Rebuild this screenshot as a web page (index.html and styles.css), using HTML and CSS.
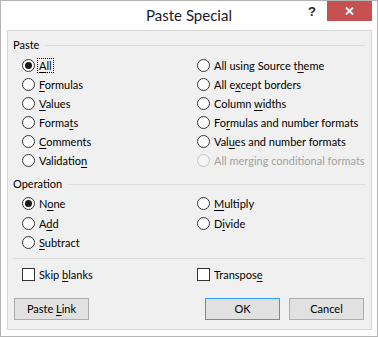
FILE: index.html
```html
<!DOCTYPE html>
<html>
<head>
<meta charset="utf-8">
<link rel="stylesheet" href="styles.css">
</head>
<body>
<div class="window">
  <div class="titlebar">
    <div></div>
    <div class="title">Paste Special</div>
    <div class="controls">
      <span class="help">?</span>
      <span class="close"><svg width="9" height="8" viewBox="0 0 9 8"><path d="M1 0.5 L8 7.5 M8 0.5 L1 7.5" stroke="#fff" stroke-width="1.8"/></svg></span>
    </div>
  </div>
  <div class="panel">
    <div class="legend"><span>Paste</span><i></i></div>
    <div class="grid paste">
      <label class="opt"><span class="radio on"></span><span class="focus"><u>A</u>ll</span></label>
      <label class="opt"><span class="radio"></span><span>All using Source t<u>h</u>eme</span></label>
      <label class="opt"><span class="radio"></span><span><u>F</u>ormulas</span></label>
      <label class="opt"><span class="radio"></span><span>All e<u>x</u>cept borders</span></label>
      <label class="opt"><span class="radio"></span><span><u>V</u>alues</span></label>
      <label class="opt"><span class="radio"></span><span>Column <u>w</u>idths</span></label>
      <label class="opt"><span class="radio"></span><span>Forma<u>t</u>s</span></label>
      <label class="opt"><span class="radio"></span><span>Fo<u>r</u>mulas and number formats</span></label>
      <label class="opt"><span class="radio"></span><span><u>C</u>omments</span></label>
      <label class="opt"><span class="radio"></span><span>Val<u>u</u>es and number formats</span></label>
      <label class="opt"><span class="radio"></span><span>Validatio<u>n</u></span></label>
      <label class="opt disabled"><span class="radio"></span><span>All merging conditional formats</span></label>
    </div>
    <div class="legend op"><span>Operation</span><i></i></div>
    <div class="grid operation">
      <label class="opt"><span class="radio on"></span><span>N<u>o</u>ne</span></label>
      <label class="opt"><span class="radio"></span><span><u>M</u>ultiply</span></label>
      <label class="opt"><span class="radio"></span><span>A<u>d</u>d</span></label>
      <label class="opt"><span class="radio"></span><span>D<u>i</u>vide</span></label>
      <label class="opt"><span class="radio"></span><span><u>S</u>ubtract</span></label>
    </div>
    <div class="sep"></div>
    <div class="grid checks">
      <label class="opt"><span class="check"></span><span>Skip <u>b</u>lanks</span></label>
      <label class="opt"><span class="check"></span><span>Transpos<u>e</u></span></label>
    </div>
    <div class="buttons">
      <button class="btn">Paste <u>L</u>ink</button>
      <span class="spacer"></span>
      <button class="btn default">OK</button>
      <button class="btn">Cancel</button>
    </div>
  </div>
</div>
</body>
</html>
```

FILE: styles.css
```css
* { box-sizing: border-box; }
html, body { margin: 0; padding: 0; background: #fff; }
body {
  font-family: Lato, "Noto Sans", sans-serif;
  font-size: 11px;
  color: #000;
}
.window {
  width: 378px;
  height: 337px;
  border: 1px solid #b4b4b4;
  background: #fff;
  display: flex;
  flex-direction: column;
}
.titlebar {
  height: 29px;
  display: grid;
  grid-template-columns: 1fr auto 1fr;
  align-items: start;
}
.title {
  font-size: 15px;
  color: #1a1a2a;
  line-height: 18px;
  margin-top: 5px;
}
.controls {
  display: flex;
  justify-content: flex-end;
  align-items: flex-start;
  padding-right: 5px;
}
.help {
  font-weight: bold;
  font-size: 13px;
  line-height: 14px;
  margin-top: 4px;
  margin-right: 11px;
  color: #222;
  font-family: "Liberation Sans", sans-serif;
}
.close {
  width: 45px;
  height: 20px;
  background: #c75050;
  display: flex;
  align-items: center;
  justify-content: center;
}
.panel {
  margin: 0 5px 0 6px;
  height: 300px;
  border: 1px solid #d7d7d7;
  background: #f0f0f0;
  padding: 6px 6px 0 5px;
  display: flex;
  flex-direction: column;
}
.legend {
  display: flex;
  align-items: center;
  height: 16px;
  line-height: 16px;
}
.legend i {
  flex: 1;
  height: 1px;
  background: #dcdcdc;
  margin-left: 6px;
}
.legend.op { margin-top: 6px; }
.grid {
  display: grid;
  grid-template-columns: 175px 1fr;
  padding-left: 9px;
}
.paste { margin-top: 3px; }
.operation { margin-top: 2px; }
.opt {
  height: 19px;
  display: flex;
  align-items: center;
  white-space: nowrap;
}
.operation .opt { height: 19.5px; }
.radio {
  width: 13px;
  height: 13px;
  border: 1px solid #333;
  border-radius: 50%;
  background: #fff;
  margin-right: 4px;
  flex: none;
  display: flex;
  align-items: center;
  justify-content: center;
}
.radio.on::after {
  content: "";
  width: 7px;
  height: 7px;
  border-radius: 50%;
  background: #1a1a1a;
}
.disabled { color: #a0a0a0; }
.disabled .radio {
  border-color: #c4c4c4;
  background: #f4f4f4;
}
.focus {
  outline: 1px dotted #000;
  outline-offset: 0;
  padding: 0 1px;
  margin-left: -1px;
}
u { text-underline-offset: 2px; }
.sep {
  height: 1px;
  background: #dcdcdc;
  margin-top: 5px;
}
.checks { margin-top: 6px; }
.check {
  width: 13px;
  height: 13px;
  border: 1px solid #333;
  background: #fff;
  margin-right: 4px;
  flex: none;
}
.buttons {
  display: flex;
  gap: 9px;
  margin-top: 14px;
  padding: 0 1px;
}
.spacer { flex: 1; }
.btn {
  width: 75px;
  height: 22px;
  border: 1px solid #adadad;
  background: #e1e1e1;
  font-family: inherit;
  font-size: 11px;
  color: #000;
  padding: 0;
}
.btn.default { border-color: #3399ff; }
```
